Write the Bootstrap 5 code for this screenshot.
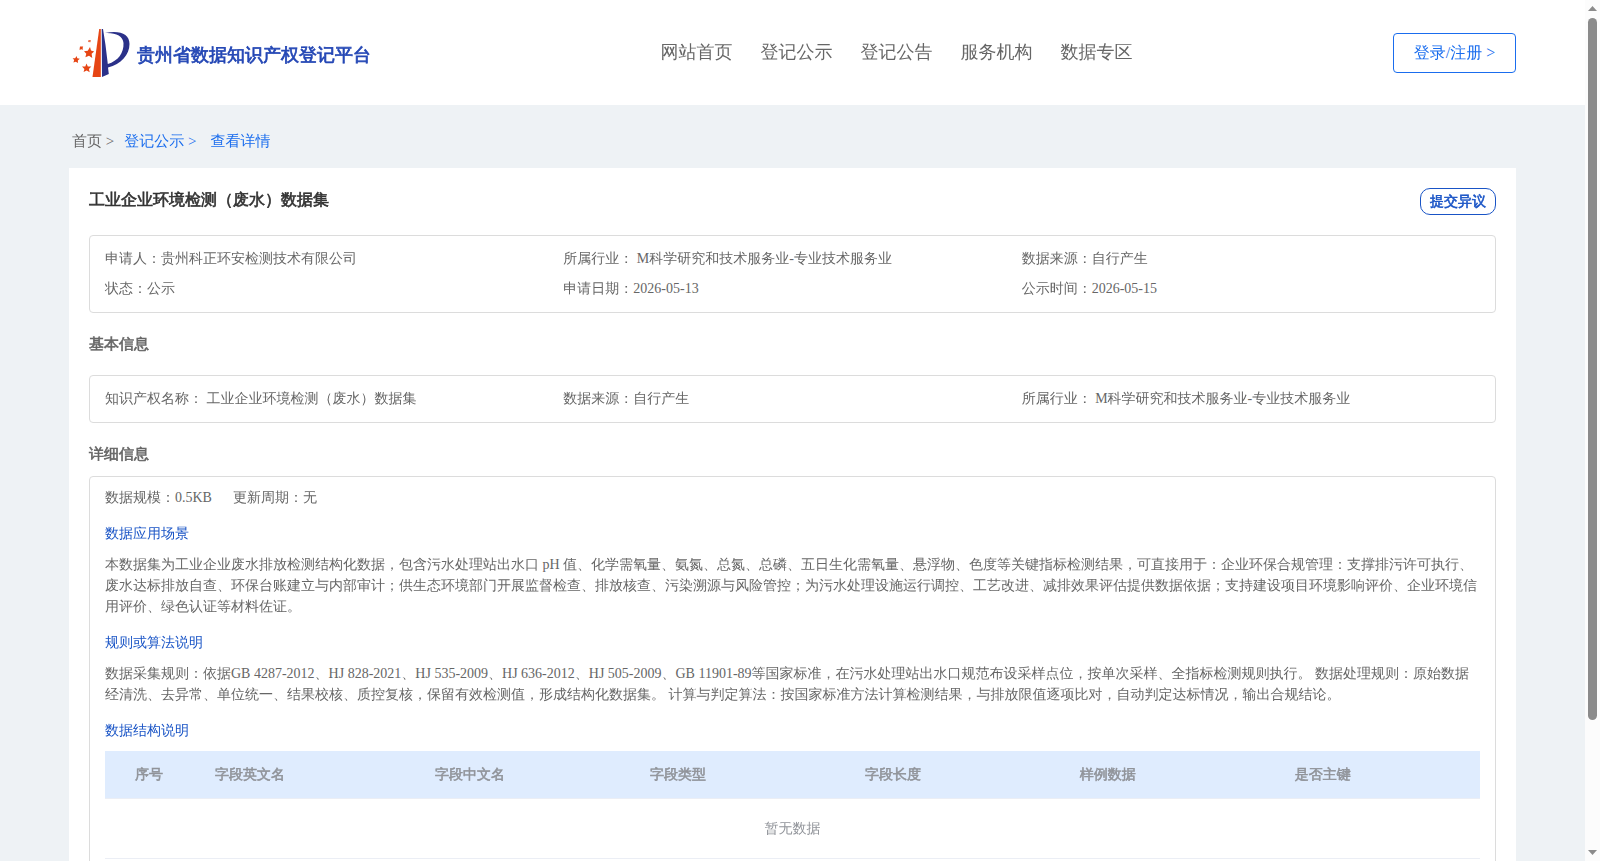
<!DOCTYPE html>
<html lang="zh-CN">
<head>
<meta charset="utf-8">
<meta name="viewport" content="width=device-width, initial-scale=1">
<title>贵州省数据知识产权登记平台</title>
<link rel="stylesheet" href="https://cdn.jsdelivr.net/npm/bootstrap@5.3.0/dist/css/bootstrap.min.css">
<style>
body{font-family:"Liberation Serif","WenQuanYi Zen Hei","Noto Sans CJK SC",serif;font-size:14px;line-height:21px;color:#666;background:#eef2f5}
a{text-decoration:none}
.page-gutter{padding-left:69px;padding-right:69px}
.site-head{height:105px}
.heavy{font-weight:700;-webkit-text-stroke:.04em currentColor}
.brand-text{font-size:18px;color:#2447b5;padding-top:6px}
.site-nav{gap:28px;font-size:18px;padding-left:29px}
.site-nav a,.crumb-home{color:#666}
.btn-login{width:123px;height:40px;padding:0;border:1px solid #1a6dee;border-radius:4px;color:#1a6dee;font-size:16px}
.crumbs{height:63px;padding:9px 3px 0;font-size:15px}
.crumbs .crumb-on{color:#1a6dee;margin-left:10px}
.crumbs .crumb-now{margin-left:14px}
.panel{padding:20px}
.panel-head{margin-bottom:20px}
.panel-title{font-size:16px;line-height:24px;color:#333}
.btn-dispute{width:76px;height:27px;padding:0;border:1px solid #1954c6;border-radius:10px;color:#1954c6;font-size:14px;line-height:21px}
.box{border:1px solid #dcdcdc;border-radius:4px;padding:8px 15px}
.box .col{line-height:30px}
.section-name{font-size:15px;line-height:22px;color:#666;margin:20px 0}
.section-name.section-tight{margin-bottom:11px}
.detail{padding:10px 15px}
.meta-line{gap:21px}
.sub-name{font-size:14px;line-height:21px;color:#1954c6;margin:15px 0 10px;font-weight:400}
.fields{table-layout:fixed;color:#909399}
.fields th{background:#dfecfe;height:47px;padding:0;vertical-align:middle;border-bottom:1px solid #ebeef5}
.fields th:first-child{width:100px;text-align:center;padding-right:12px}
.fields th:nth-child(2){width:16%}
.fields th:last-child{width:14.2%}
.fields th:nth-child(n+2){padding-left:10px}
.fields td{height:60px;text-align:center;vertical-align:middle;border-bottom:1px solid #ebeef5}
.scroll-rail{width:15px;background:#fcfcfc;padding:6px 0}
.scroll-thumb{width:9px;margin-top:7px;border-radius:5px;background:#8b8b8b;flex:0 0 82.7%}
</style>
</head>
<body>
<div class="d-flex vh-100 overflow-hidden">
<div class="flex-grow-1 overflow-hidden">
<header class="site-head page-gutter bg-white d-flex align-items-center justify-content-between">
<a href="#" class="d-flex align-items-center">
<svg width="68" height="56" viewBox="69 25 68 56" aria-hidden="true">
<path d="M99.200 29H100.800V77H92.500Z" fill="#e64514"/>
<path d="M101.700 29H103L105.500 45L107.800 64C118 61 124 53 123.500 43C123 36 116 32.500 105 33C120 30 129.500 34 129.500 44C129.500 55 121 64 108 67.500L108.800 74L102 77Z" fill="#2b3189"/>
<g fill="#e64514"><path d="M90 47L91 50.500L94.200 51.500L91.600 53.700L92.300 58L89 55.800L85.400 57.300L86.300 53.700L84 51.200L87.800 50.800Z"/>
<path d="M86.500 63.500L87.800 66.500L91.300 66.600L88.900 69L89.700 72.300L86.700 70.600L83.600 72L84.400 69L82 66.600L85.300 66.400Z"/>
<path d="M76.500 56L77.300 58.300L79.800 58.700L77.800 60.400L78 63L75.800 61.700L73.400 62.600L74.200 60.100L72.600 58.300L75.200 58.300Z"/>
<path d="M80 46.500L83.200 46.500L82.600 48L83 49.800L81.200 49.300L79.600 50L79.700 48.300Z"/><path d="M88.500 40L90.800 40L90.500 42.300L88 42Z" opacity=".75"/></g>
</svg><span class="brand-text heavy">贵州省数据知识产权登记平台</span></a>
<nav class="site-nav d-flex"><a href="#">网站首页</a><a href="#">登记公示</a><a href="#">登记公告</a><a href="#">服务机构</a><a href="#">数据专区</a></nav>
<button type="button" class="btn btn-login">登录/注册 &gt;</button>
</header>
<main class="page-gutter">
<nav class="crumbs d-flex align-items-center" aria-label="面包屑"><a href="#" class="crumb-home">首页 &gt;</a><a href="#" class="crumb-on">登记公示 &gt;</a><a href="#" class="crumb-on crumb-now">查看详情</a></nav>
<section class="panel bg-white">
<div class="panel-head d-flex justify-content-between align-items-start"><h1 class="panel-title heavy m-0">工业企业环境检测（废水）数据集</h1><button type="button" class="btn btn-dispute heavy">提交异议</button></div>
<div class="box">
<div class="row g-0"><div class="col">申请人：贵州科正环安检测技术有限公司</div><div class="col">所属行业： M科学研究和技术服务业-专业技术服务业</div><div class="col">数据来源：自行产生</div></div>
<div class="row g-0"><div class="col">状态：公示</div><div class="col">申请日期：2026-05-13</div><div class="col">公示时间：2026-05-15</div></div>
</div>
<h2 class="section-name heavy">基本信息</h2>
<div class="box"><div class="row g-0"><div class="col">知识产权名称： 工业企业环境检测（废水）数据集</div><div class="col">数据来源：自行产生</div><div class="col">所属行业： M科学研究和技术服务业-专业技术服务业</div></div></div>
<h2 class="section-name section-tight heavy">详细信息</h2>
<div class="box detail">
<div class="meta-line d-flex"><span>数据规模：0.5KB</span><span>更新周期：无</span></div>
<h3 class="sub-name">数据应用场景</h3>
<p class="m-0">本数据集为工业企业废水排放检测结构化数据，包含污水处理站出水口 pH 值、化学需氧量、氨氮、总氮、总磷、五日生化需氧量、悬浮物、色度等关键指标检测结果，可直接用于：企业环保合规管理：支撑排污许可执行、废水达标排放自查、环保台账建立与内部审计；供生态环境部门开展监督检查、排放核查、污染溯源与风险管控；为污水处理设施运行调控、工艺改进、减排效果评估提供数据依据；支持建设项目环境影响评价、企业环境信用评价、绿色认证等材料佐证。</p>
<h3 class="sub-name">规则或算法说明</h3>
<p class="m-0">数据采集规则：依据GB 4287-2012、HJ 828-2021、HJ 535-2009、HJ 636-2012、HJ 505-2009、GB 11901-89等国家标准，在污水处理站出水口规范布设采样点位，按单次采样、全指标检测规则执行。 数据处理规则：原始数据经清洗、去异常、单位统一、结果校核、质控复核，保留有效检测值，形成结构化数据集。 计算与判定算法：按国家标准方法计算检测结果，与排放限值逐项比对，自动判定达标情况，输出合规结论。</p>
<h3 class="sub-name">数据结构说明</h3>
<table class="fields w-100"><thead><tr class="heavy"><th scope="col">序号</th><th scope="col">字段英文名</th><th scope="col">字段中文名</th><th scope="col">字段类型</th><th scope="col">字段长度</th><th scope="col">样例数据</th><th scope="col">是否主键</th></tr></thead><tbody><tr><td colspan="7">暂无数据</td></tr></tbody></table>
</div>
</section>
</main>
</div>
<div class="scroll-rail d-flex flex-column align-items-center flex-shrink-0" aria-hidden="true">
<svg class="flex-shrink-0" width="9" height="5"><path d="M4.500 0L9 5H0Z" fill="#8b8b8b"/></svg>
<div class="scroll-thumb"></div>
<svg class="flex-shrink-0 mt-auto" width="9" height="5"><path d="M0 0H9L4.500 5Z" fill="#8b8b8b"/></svg>
</div>
</div>
<script src="https://cdn.jsdelivr.net/npm/bootstrap@5.3.0/dist/js/bootstrap.bundle.min.js"></script>
</body>
</html>
